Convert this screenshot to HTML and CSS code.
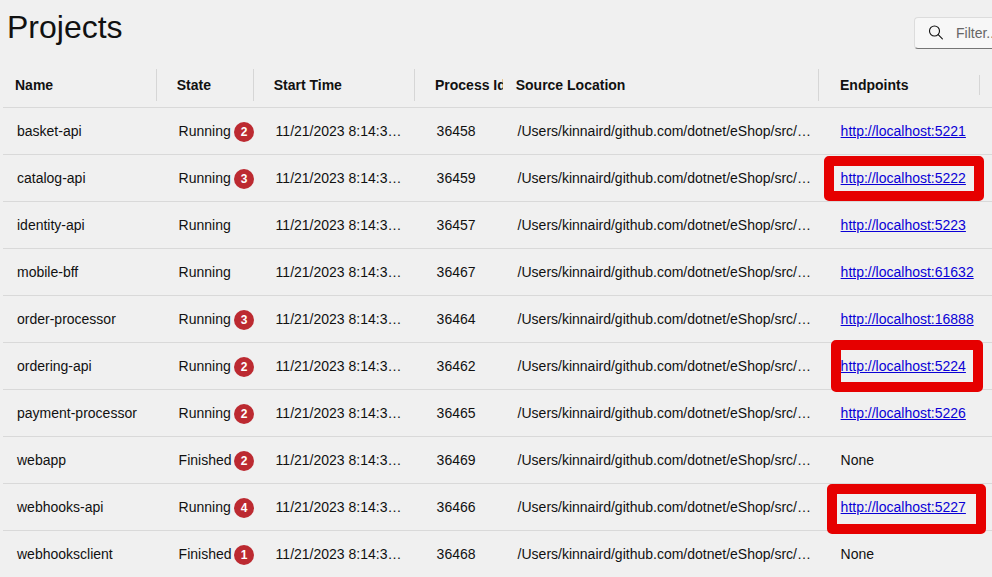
FILE: index.html
```html
<!DOCTYPE html>
<html lang="en">
<head>
<meta charset="utf-8">
<title>Projects</title>
<link rel="stylesheet" href="styles.css">
</head>
<body>
<header class="top">
  <h1>Projects</h1>
  <div class="search">
    <svg width="16" height="16" viewBox="0 0 16 16" fill="none" stroke="#111" stroke-width="1.1" stroke-linecap="round"><circle cx="6.5" cy="6" r="5"/><path d="M10.2 9.7 14.4 13.9"/></svg>
    <span>Filter...</span>
  </div>
</header>
<main class="grid">
  <div class="row head"><div>Name</div><div>State</div><div>Start Time</div><div class="clip"><span>Process Id</span></div><div>Source Location</div><div class="last">Endpoints</div></div>
  <div class="row"><div>basket-api</div><div>Running<b class="badge">2</b></div><div>11/21/2023 8:14:3…</div><div>36458</div><div>/Users/kinnaird/github.com/dotnet/eShop/src/…</div><div><a href="#">http://localhost:5221</a></div></div>
  <div class="row"><div>catalog-api</div><div>Running<b class="badge">3</b></div><div>11/21/2023 8:14:3…</div><div>36459</div><div>/Users/kinnaird/github.com/dotnet/eShop/src/…</div><div><a href="#">http://localhost:5222</a><i class="mark mark-catalog"></i></div></div>
  <div class="row"><div>identity-api</div><div>Running</div><div>11/21/2023 8:14:3…</div><div>36457</div><div>/Users/kinnaird/github.com/dotnet/eShop/src/…</div><div><a href="#">http://localhost:5223</a></div></div>
  <div class="row"><div>mobile-bff</div><div>Running</div><div>11/21/2023 8:14:3…</div><div>36467</div><div>/Users/kinnaird/github.com/dotnet/eShop/src/…</div><div><a href="#">http://localhost:61632</a></div></div>
  <div class="row"><div>order-processor</div><div>Running<b class="badge">3</b></div><div>11/21/2023 8:14:3…</div><div>36464</div><div>/Users/kinnaird/github.com/dotnet/eShop/src/…</div><div><a href="#">http://localhost:16888</a></div></div>
  <div class="row"><div>ordering-api</div><div>Running<b class="badge">2</b></div><div>11/21/2023 8:14:3…</div><div>36462</div><div>/Users/kinnaird/github.com/dotnet/eShop/src/…</div><div><a href="#">http://localhost:5224</a><i class="mark mark-ordering"></i></div></div>
  <div class="row"><div>payment-processor</div><div>Running<b class="badge">2</b></div><div>11/21/2023 8:14:3…</div><div>36465</div><div>/Users/kinnaird/github.com/dotnet/eShop/src/…</div><div><a href="#">http://localhost:5226</a></div></div>
  <div class="row"><div>webapp</div><div>Finished<b class="badge">2</b></div><div>11/21/2023 8:14:3…</div><div>36469</div><div>/Users/kinnaird/github.com/dotnet/eShop/src/…</div><div>None</div></div>
  <div class="row"><div>webhooks-api</div><div>Running<b class="badge">4</b></div><div>11/21/2023 8:14:3…</div><div>36466</div><div>/Users/kinnaird/github.com/dotnet/eShop/src/…</div><div><a href="#">http://localhost:5227</a><i class="mark mark-webhooks"></i></div></div>
  <div class="row"><div>webhooksclient</div><div>Finished<b class="badge">1</b></div><div>11/21/2023 8:14:3…</div><div>36468</div><div>/Users/kinnaird/github.com/dotnet/eShop/src/…</div><div>None</div></div>
</main>
</body>
</html>
```
FILE: styles.css
```css
* { box-sizing: border-box; }
body {
  margin: 0;
  height: 577px;
  overflow: hidden;
  background: #f0f0f0;
  color: #111;
  font: 14px/20px "Liberation Sans", Arial, sans-serif;
}
.top {
  height: 62px;
  display: flex;
  justify-content: space-between;
  align-items: flex-start;
  padding-left: 7px;
}
h1 {
  margin: 7px 0 0;
  font-size: 32px;
  line-height: 40px;
  font-weight: 400;
}
.search {
  width: 78px;
  height: 32px;
  margin-top: 17px;
  padding-left: 13px;
  display: flex;
  align-items: center;
  gap: 12px;
  overflow: hidden;
  white-space: nowrap;
  background: #f7f7f7;
  border: 1px solid #dcdcdc;
  border-right: 0;
  border-bottom-color: #757575;
  border-radius: 4px 0 0 4px;
  color: #666;
}
.search svg { flex: none; }
.grid { padding-left: 3px; }
.row {
  display: grid;
  grid-template-columns: 154px 97px 161px 81px 323px 1fr;
  height: 47px;
  border-bottom: 1px solid #d9d9d9;
}
.row > div {
  position: relative;
  display: flex;
  align-items: center;
  padding-left: 21.6px;
  white-space: nowrap;
}
.row > div:first-child { padding-left: 14px; }
.row.head {
  height: 46px;
  font-weight: 700;
}
.head > div {
  height: 32px;
  margin-top: 7px;
  border-right: 1px solid #d6d6d6;
}
.row.head > div { padding-left: 19.7px; }
.row.head > div:first-child { padding-left: 12px; }
.row.head > .clip { padding-left: 20px; border-right: 0; }
.clip span {
  width: 68px;
  flex: none;
  overflow: hidden;
}
.row.head > .last {
  width: 161px;
  height: 20px;
  margin-top: 13px;
  padding-left: 21px;
}
.badge {
  position: absolute;
  left: 77px;
  top: 14px;
  width: 20px;
  height: 20px;
  border-radius: 50%;
  background: #bc2a31;
  color: #fff;
  font-size: 12px;
  line-height: 20px;
  text-align: center;
}
a { color: #0a00d6; }
.mark {
  position: absolute;
  border: 10px solid #e60000;
  border-radius: 5px;
}
.mark-catalog { left: 5px; top: 1px; width: 160px; height: 45px; }
.mark-ordering { left: 12px; top: -3px; width: 152px; height: 52px; }
.mark-webhooks { left: 8px; top: 0; width: 159px; height: 50px; z-index: 1; }
```
